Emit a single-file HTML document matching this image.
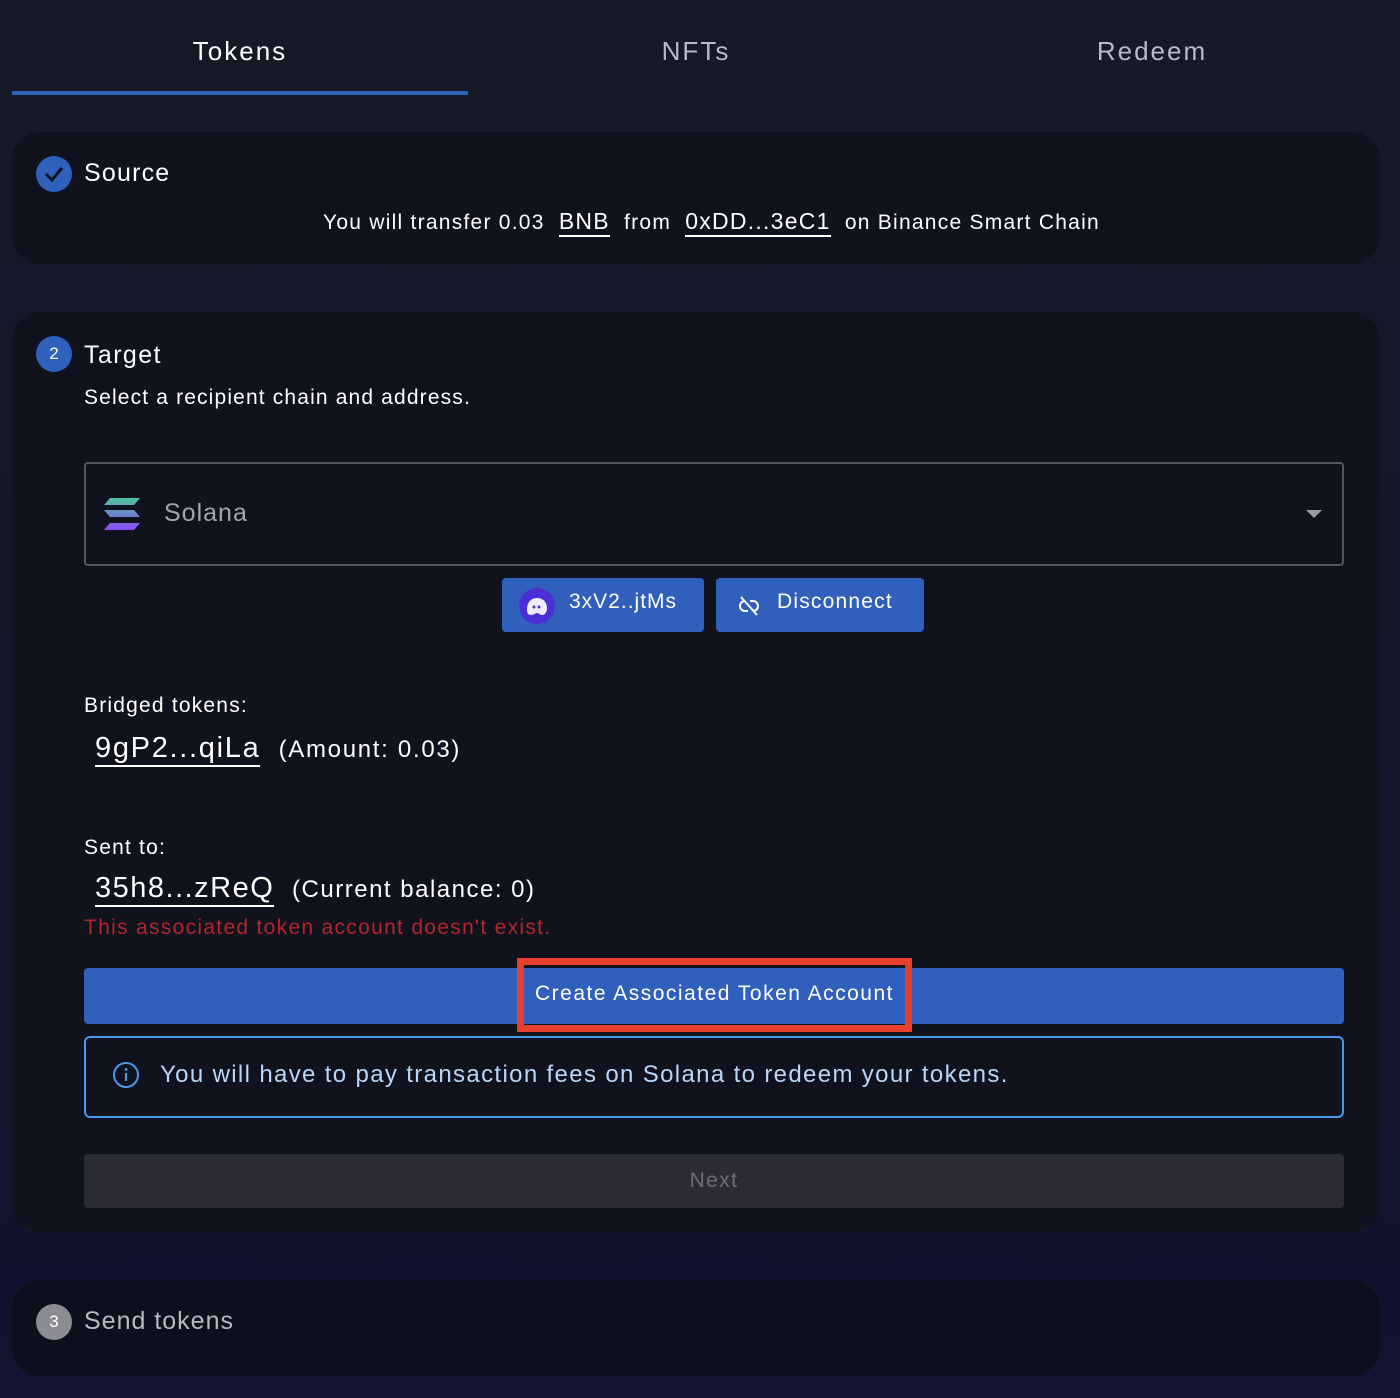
<!DOCTYPE html>
<html><head><meta charset="utf-8"><style>
*{margin:0;padding:0;box-sizing:border-box}
body{width:1400px;height:1398px;overflow:hidden;background:linear-gradient(180deg,#161a27 0%,#141728 40%,#121430 100%);font-family:"Liberation Sans",sans-serif;color:#fff;position:relative;letter-spacing:1.4px}
.a{position:absolute;white-space:nowrap}
.card{position:absolute;left:12px;width:1368px;border-radius:28px;background:#10121e}
.circ{position:absolute;width:36px;height:36px;border-radius:50%;background:#2f60bb;color:#fff;font-size:17px;text-align:center;line-height:36px;letter-spacing:0}
.u{border-bottom:2px solid #fff;padding-bottom:1px}
.btn{position:absolute;background:#3060bb;border-radius:4px}
</style></head><body>
<div class="a" style="left:12px;top:36px;width:456px;text-align:center;font-size:26px;color:#fff;letter-spacing:2px">Tokens</div>
<div class="a" style="left:468px;top:36px;width:456px;text-align:center;font-size:26px;color:#b8bac4;letter-spacing:2px">NFTs</div>
<div class="a" style="left:924px;top:36px;width:456px;text-align:center;font-size:26px;color:#b8bac4;letter-spacing:2px">Redeem</div>
<div class="a" style="left:12px;top:91px;width:456px;height:4px;background:#3160bd"></div>

<div class="card" style="top:132px;height:132px"></div>
<div class="circ" style="left:36px;top:156px"><svg width="36" height="36" viewBox="0 0 36 36"><path d="M10 18l6 6 10-12" fill="none" stroke="#10121e" stroke-width="3"/></svg></div>
<div class="a" style="left:84px;top:159px;font-size:25px;letter-spacing:1.2px">Source</div>
<div class="a" style="left:323px;top:208px;font-size:21px;letter-spacing:1.25px">You will transfer 0.03&nbsp;&nbsp;<span class="u" style="font-size:23px">BNB</span>&nbsp;&nbsp;from&nbsp;&nbsp;<span class="u" style="font-size:23px">0xDD...3eC1</span>&nbsp;&nbsp;on Binance Smart Chain</div>

<div class="card" style="top:312px;height:920px"></div>
<div class="circ" style="left:36px;top:336px">2</div>
<div class="a" style="left:84px;top:341px;font-size:25px">Target</div>
<div class="a" style="left:84px;top:386px;font-size:21px;letter-spacing:1.15px">Select a recipient chain and address.</div>
<div class="a" style="left:84px;top:462px;width:1260px;height:104px;border:2px solid #55575f;border-radius:4px"></div>
<svg class="a" style="left:104px;top:498px" width="36" height="32" viewBox="0 0 36 32"><defs><linearGradient id="g" x1="0" y1="0" x2="0" y2="1"><stop offset="0" stop-color="#4fc3a1"/><stop offset="1" stop-color="#8a4cf5"/></linearGradient></defs><path d="M6 0h30l-6 7H0zM0 12h30l6 7H6zM6 25h30l-6 7H0z" fill="url(#g)"/></svg>
<div class="a" style="left:164px;top:499px;font-size:25px;color:#a4a6ae;letter-spacing:1px">Solana</div>
<svg class="a" style="left:1306px;top:510px" width="16" height="8"><path d="M0 0h16L8 8z" fill="#9a9ca4"/></svg>

<div class="btn" style="left:502px;top:578px;width:202px;height:54px"></div>
<div class="a" style="left:519px;top:588px;width:36px;height:36px;border-radius:50%;background:#4b2fd6"><svg width="36" height="36" viewBox="0 0 36 36"><path d="M8 22c0-8 4-12 10-12s10 4 10 10c0 4-2 7-5 7-2 0-3-2-5-2s-3 2-6 2c-3 0-4-2-4-5z" fill="#f0ecfb"/><circle cx="15" cy="19" r="1.5" fill="#4b2fd6"/><circle cx="20" cy="19" r="1.5" fill="#4b2fd6"/></svg></div>
<div class="a" style="left:569px;top:590px;font-size:21px;letter-spacing:1px">3xV2..jtMs</div>
<div class="btn" style="left:716px;top:578px;width:208px;height:54px"></div>
<svg class="a" style="left:735px;top:592px" width="28" height="28" viewBox="0 0 28 28"><g fill="none" stroke="#fff" stroke-width="2"><path d="M10 9a5 5 0 0 0-5 5 5 5 0 0 0 5 5h3M18 9h-3M18 19a5 5 0 0 0 5-5 5 5 0 0 0-5-5"/><path d="M6 5l16 18"/></g></svg>
<div class="a" style="left:777px;top:590px;font-size:21px;letter-spacing:1.2px">Disconnect</div>

<div class="a" style="left:84px;top:694px;font-size:21px;letter-spacing:1.2px">Bridged tokens:</div>
<div class="a" style="left:95px;top:732px;font-size:29px;letter-spacing:1.7px"><span class="u">9gP2...qiLa</span> <span style="font-size:24px">&nbsp;(Amount: 0.03)</span></div>
<div class="a" style="left:84px;top:836px;font-size:21px;letter-spacing:1.2px">Sent to:</div>
<div class="a" style="left:95px;top:872px;font-size:29px;letter-spacing:1.5px"><span class="u">35h8...zReQ</span> <span style="font-size:24px">&nbsp;(Current balance: 0)</span></div>
<div class="a" style="left:84px;top:916px;font-size:21px;color:#b3262a;letter-spacing:1.3px">This associated token account doesn't exist.</div>

<div class="btn" style="left:84px;top:968px;width:1260px;height:56px"></div>
<div class="a" style="left:517px;top:958px;width:395px;height:74px;border:7px solid #e8402a"></div>
<div class="a" style="left:517px;top:982px;width:395px;text-align:center;font-size:21px;letter-spacing:1.5px">Create Associated Token Account</div>

<div class="a" style="left:84px;top:1036px;width:1260px;height:82px;border:2px solid #4a98ee;border-radius:6px"></div>
<svg class="a" style="left:112px;top:1061px" width="28" height="28" viewBox="0 0 28 28"><circle cx="14" cy="14" r="12" fill="none" stroke="#4a98ee" stroke-width="2"/><path d="M14 12v8" stroke="#4a98ee" stroke-width="2.2"/><circle cx="14" cy="8.5" r="1.4" fill="#4a98ee"/></svg>
<div class="a" style="left:160px;top:1061px;font-size:24px;color:#b9d7f6;letter-spacing:1.35px">You will have to pay transaction fees on Solana to redeem your tokens.</div>

<div class="a" style="left:84px;top:1154px;width:1260px;height:54px;background:#2b2c38;border-radius:4px;text-align:center;line-height:54px;font-size:21px;color:#6c6d76">Next</div>

<div class="card" style="top:1280px;height:96px;background:#0e0f1c"></div>
<div class="circ" style="left:36px;top:1304px;background:#8c8d94">3</div>
<div class="a" style="left:84px;top:1307px;font-size:25px;color:#b8bac2;letter-spacing:1px">Send tokens</div>
</body></html>
